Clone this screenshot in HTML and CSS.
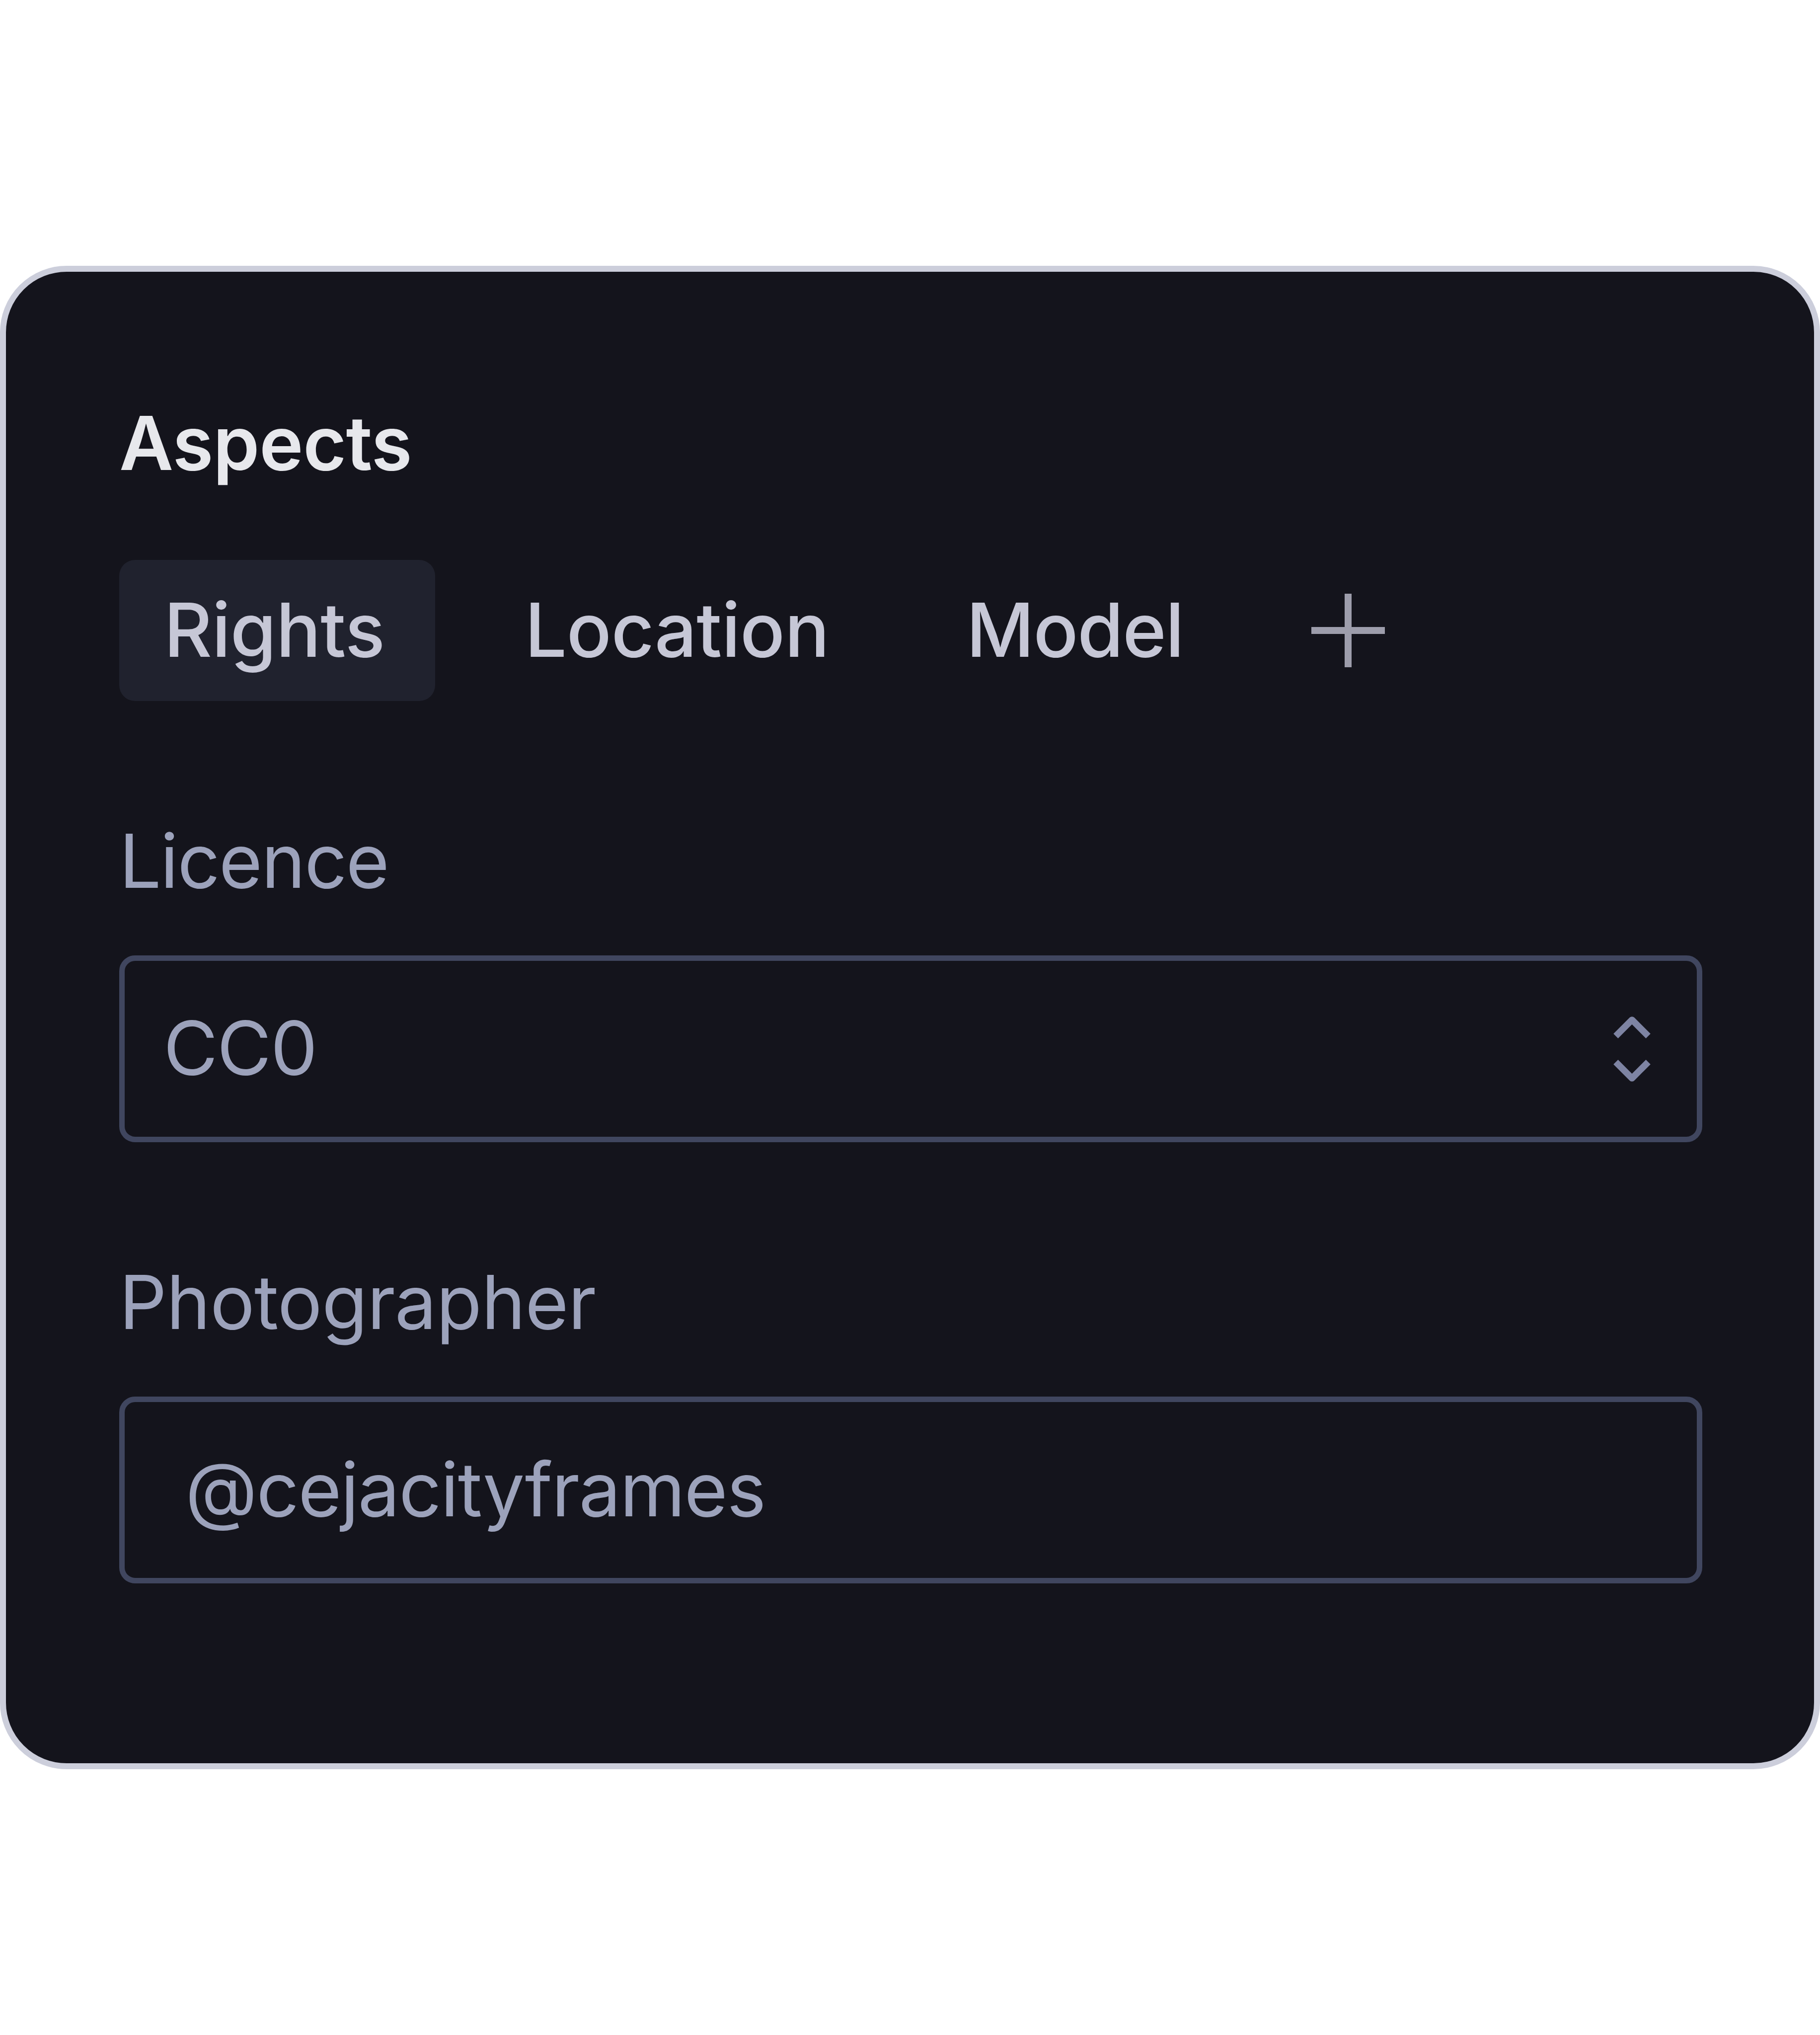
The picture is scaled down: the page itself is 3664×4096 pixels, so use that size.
FILE: index.html
```html
<!DOCTYPE html>
<html lang="en">
<head>
  <meta charset="UTF-8">
  <title>Aspects</title>
  <link rel="stylesheet" href="styles.css">
</head>
<body>
  <div class="card">
    <h1>Aspects</h1>

    <!-- Tabs -->
    <div class="tabs">
      <button class="tab active">Rights</button>
      <button class="tab">Location</button>
      <button class="tab model">Model</button>
      <button class="add" aria-label="Add aspect">
        <svg viewBox="0 0 148 148"><path d="M74 0v148M0 74h148" /></svg>
      </button>
    </div>

    <!-- Licence -->
    <div class="field">
      <div class="label licence">Licence</div>
      <div class="select">
        <span>CC0</span>
        <svg viewBox="0 0 24 24"><path d="M8.25 15 12 18.75 15.75 15m-7.5-6L12 5.25 15.75 9" /></svg>
      </div>
    </div>

    <!-- Photographer -->
    <div class="field">
      <div class="label">Photographer</div>
      <div class="input"><span>@cejacityframes</span></div>
    </div>
  </div>
</body>
</html>
```
FILE: styles.css
```css
* {
  box-sizing: border-box;
}
body {
  margin: 0;
  background: #fff;
  font-family: Inter, sans-serif;
  font-size: 150px;
}
.card {
  width: 3664px;
  height: 3026px;
  margin-top: 535px;
  padding: 245px 225px 0 228px;
  border: 12px solid #cccedb;
  border-radius: 134px;
  background: #14141c;
}
h1 {
  margin: 0 0 135px;
  font-size: 150px;
  font-weight: 600;
  line-height: 200px;
  letter-spacing: -0.7px;
  color: #e7e8ec;
}
.tabs {
  display: flex;
  align-items: center;
}
button {
  padding: 0;
  border: none;
  background: none;
  font: inherit;
  color: inherit;
}
.tab {
  height: 284px;
  padding: 0 96px 4px 90px;
  margin-right: 90px;
  border-radius: 32px;
  font-weight: 500;
  letter-spacing: -0.7px;
  color: #c6c7d6;
}
.active {
  padding-right: 102px;
  background: #20222e;
}
.model {
  margin-right: 162px;
  letter-spacing: -1.8px;
}
svg {
  display: block;
  fill: none;
}
.add svg {
  width: 148px;
  height: 148px;
  stroke: #9d9dab;
  stroke-width: 14;
}
.field {
  margin-top: 222px;
}
.label {
  margin-bottom: 90px;
  line-height: 200px;
  letter-spacing: -0.8px;
  color: #9ca2bb;
}
.licence {
  letter-spacing: -2px;
}
.select, .input {
  display: flex;
  align-items: center;
  justify-content: space-between;
  height: 376px;
  padding: 0 26px 4px 78px;
  border: 11px solid #40465f;
  border-radius: 32px;
  letter-spacing: -1.7px;
  color: #9ca2bb;
}
.input {
  padding-left: 122px;
}
.select svg {
  width: 209px;
  height: 209px;
  margin-top: 4px;
  stroke: #7e84a3;
  stroke-width: 1.5;
  stroke-linejoin: round;
}
```
